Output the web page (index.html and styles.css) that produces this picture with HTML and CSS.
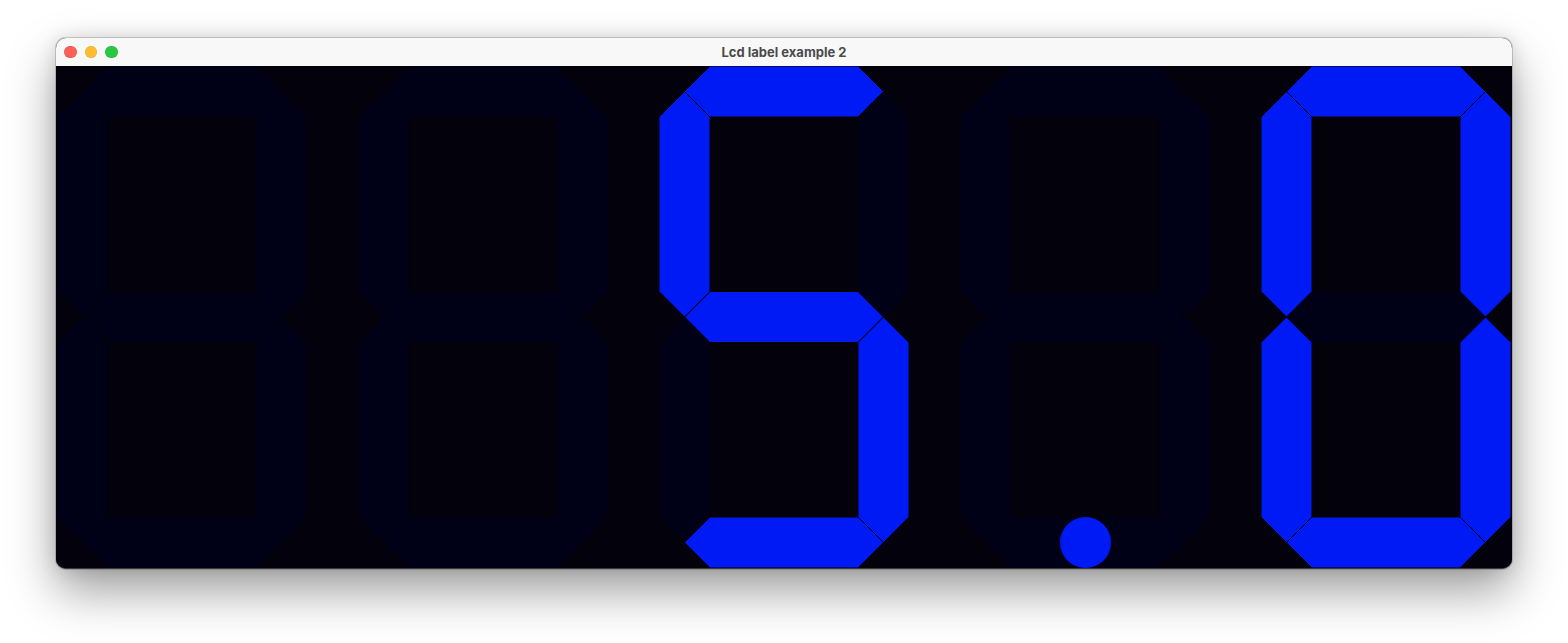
FILE: index.html
```html
<!DOCTYPE html>
<html>
<head>
<meta charset="utf-8">
<title>Lcd label example 2</title>
<link rel="stylesheet" href="styles.css">
</head>
<body>
<div class="window">
  <div class="titlebar">
    <div class="lights">
      <span class="light red"></span>
      <span class="light yellow"></span>
      <span class="light green"></span>
    </div>
    <div class="title">Lcd label example 2</div>
  </div>
  <div class="content">
    <svg class="lcd" width="1456" height="502" viewBox="0 0 1456 502">
      <defs>
        <polygon id="h" points="25.5,25.5 51,0 199,0 224.5,25.5 199,51 51,51"/>
        <polygon id="v" points="25.5,25.5 51,51 51,225.5 25.5,251 0,225.5 0,51"/>
      </defs>
      <!-- digit 1: dim 8 -->
      <g transform="translate(1,0)">
        <use href="#h" class="off"/>
        <use href="#h" class="off" y="225.5"/>
        <use href="#h" class="off" y="451"/>
        <use href="#v" class="off"/>
        <use href="#v" class="off" y="225.5"/>
        <use href="#v" class="off" x="199"/>
        <use href="#v" class="off" x="199" y="225.5"/>
      </g>
      <!-- digit 2: dim 8 -->
      <g transform="translate(302,0)">
        <use href="#h" class="off"/>
        <use href="#h" class="off" y="225.5"/>
        <use href="#h" class="off" y="451"/>
        <use href="#v" class="off"/>
        <use href="#v" class="off" y="225.5"/>
        <use href="#v" class="off" x="199"/>
        <use href="#v" class="off" x="199" y="225.5"/>
      </g>
      <!-- digit 3: 5 -->
      <g transform="translate(603,0)">
        <use href="#v" class="off" x="199"/>
        <use href="#v" class="off" y="225.5"/>
        <use href="#h" class="on"/>
        <use href="#h" class="on" y="225.5"/>
        <use href="#h" class="on" y="451"/>
        <use href="#v" class="on"/>
        <use href="#v" class="on" x="199" y="225.5"/>
      </g>
      <!-- digit 4: dim 8 with lit point -->
      <g transform="translate(904,0)">
        <use href="#h" class="off"/>
        <use href="#h" class="off" y="225.5"/>
        <use href="#h" class="off" y="451"/>
        <use href="#v" class="off"/>
        <use href="#v" class="off" y="225.5"/>
        <use href="#v" class="off" x="199"/>
        <use href="#v" class="off" x="199" y="225.5"/>
        <circle class="dot" cx="125.5" cy="476.5" r="25.5"/>
      </g>
      <!-- digit 5: 0 -->
      <g transform="translate(1205,0)">
        <use href="#h" class="off" y="225.5"/>
        <use href="#h" class="on"/>
        <use href="#h" class="on" y="451"/>
        <use href="#v" class="on"/>
        <use href="#v" class="on" y="225.5"/>
        <use href="#v" class="on" x="199"/>
        <use href="#v" class="on" x="199" y="225.5"/>
      </g>
    </svg>
  </div>
</div>
</body>
</html>
```

FILE: styles.css
```css
html, body {
  margin: 0;
  padding: 0;
  background: #ffffff;
}

html {
  height: 100%;
}

body {
  box-sizing: border-box;
  min-height: 100%;
  padding: 38px 56px 0 56px;
  font-family: Inter, "Liberation Sans", sans-serif;
}

.window {
  width: 1456px;
  border-radius: 10px;
  overflow: hidden;
  background: #000;
  border-bottom: 1px solid #3a3a3a;
  box-shadow: 0 0 0 1px rgba(0, 0, 0, 0.16), 0 22px 48px rgba(0, 0, 0, 0.38), 0 0 18px rgba(0, 0, 0, 0.12);
}

.titlebar {
  height: 28px;
  background: #f8f8f8;
  display: flex;
  align-items: center;
  position: relative;
}

.lights {
  display: flex;
  gap: 8px;
  padding-left: 8px;
}

.light {
  width: 12.5px;
  height: 12.5px;
  border-radius: 50%;
  display: block;
  box-shadow: inset 0 0 0 0.5px rgba(0, 0, 0, 0.12);
}

.red { background: #fe5f57; }
.yellow { background: #febc2e; }
.green { background: #28c840; }

.title {
  position: absolute;
  left: 0;
  right: 0;
  top: 0;
  line-height: 28px;
  text-align: center;
  font-size: 13px;
  font-weight: 700;
  color: #4b4b4b;
  pointer-events: none;
}

.content {
  height: 502px;
  background: #03020c;
}

.lcd {
  display: block;
}

.lcd .off {
  fill: #000117;
  stroke: #020108;
  stroke-width: 1;
}

.lcd .on {
  fill: #001af6;
  stroke: #000000;
  stroke-width: 1;
}

.lcd .dot {
  fill: #001af6;
}
```
